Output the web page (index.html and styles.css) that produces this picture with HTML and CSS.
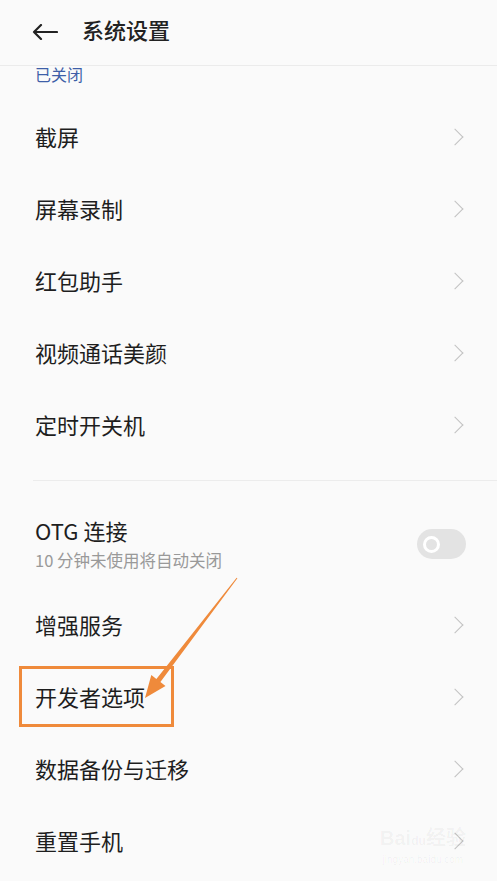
FILE: index.html
```html
<!DOCTYPE html>
<html lang="zh-CN">
<head>
  <meta charset="UTF-8" />
  <meta name="viewport" content="width=device-width, initial-scale=1.0" />
  <title>系统设置</title>
  <link rel="stylesheet" href="styles.css">
</head>
<body>
  <div class="page">
    <header class="topbar">
      <svg class="back" width="26" height="16" viewBox="0 0 26 16">
        <path d="M25 8H2M9 1L2 8l7 7" fill="none" stroke="#222" stroke-width="2.2" stroke-linecap="round" stroke-linejoin="round"/>
      </svg>
      <h1>系统设置</h1>
    </header>

    <div class="list">
      <div class="item-tail"><span class="sub sub-blue">已关闭</span></div>

      <div class="item"><span class="label">截屏</span><span class="chev"></span></div>
      <div class="item"><span class="label">屏幕录制</span><span class="chev"></span></div>
      <div class="item"><span class="label">红包助手</span><span class="chev"></span></div>
      <div class="item"><span class="label">视频通话美颜</span><span class="chev"></span></div>
      <div class="item"><span class="label">定时开关机</span><span class="chev"></span></div>

      <div class="divider"><div class="line"></div></div>

      <div class="item item-two">
        <div class="texts">
          <span class="label">OTG 连接</span>
          <span class="sub">10 分钟未使用将自动关闭</span>
        </div>
        <span class="switch"><span class="knob"></span></span>
      </div>
      <div class="item"><span class="label">增强服务</span><span class="chev"></span></div>
      <div class="item"><span class="label">开发者选项</span><span class="chev"></span></div>
      <div class="item"><span class="label">数据备份与迁移</span><span class="chev"></span></div>
      <div class="item"><span class="label">重置手机</span><span class="chev"></span></div>
    </div>

    <!-- annotation drawn over the screenshot -->
    <div class="mark-box"></div>
    <svg class="mark-arrow" width="497" height="881" viewBox="0 0 497 881">
      <polygon points="145,698 151.3,675 156.4,679 236.6,577.7 237.4,578.3 160.4,682 165.5,686" fill="#ef8a3b"/>
    </svg>

    <div class="watermark">
      <div class="wm-logo">Bai<span class="wm-du">du</span>经验</div>
      <div class="wm-url">jingyan.baidu.com</div>
    </div>
  </div>
</body>
</html>
```

FILE: styles.css
```css
body {
  margin: 0;
  background: #fafafa;
  font-family: "Noto Sans CJK SC", "Noto Sans", sans-serif;
  color: #1e1e1e;
}

.page {
  position: relative;
  width: 497px;
  height: 881px;
  overflow: hidden;
}

.topbar {
  display: flex;
  align-items: center;
  height: 65px;
  border-bottom: 1px solid #ebebeb;
  padding-left: 32px;
}

.back {
  display: block;
  margin-top: -2px;
}

.topbar h1 {
  margin: -7px 0 0 24px;
  font-size: 22px;
  font-weight: 500;
  line-height: 30px;
  color: #222;
}

.item-tail {
  height: 35px;
  padding-left: 35px;
}

.sub {
  font-size: 16.5px;
  line-height: 16px;
  color: #999;
}

.sub-blue {
  display: block;
  font-size: 16px;
  color: #3e5fa8;
}

.item {
  display: flex;
  align-items: center;
  justify-content: space-between;
  height: 72px;
  padding: 0 32px 0 35px;
}

.label {
  font-size: 22px;
  line-height: 32px;
  margin-top: -2px;
}

.chev {
  width: 11px;
  height: 11px;
  border-top: 1.6px solid #c2c2c2;
  border-right: 1.6px solid #c2c2c2;
  transform: rotate(45deg);
  margin-right: 4px;
}

.divider {
  height: 38px;
  padding: 19px 0 0 33px;
  box-sizing: border-box;
}

.divider .line {
  height: 1px;
  background: #ececec;
}

.item-two {
  height: 90px;
  box-sizing: border-box;
}

.texts {
  display: flex;
  flex-direction: column;
  margin-top: -1px;
}

.texts .sub {
  line-height: 24px;
  margin-top: 2px;
}

.switch {
  display: flex;
  align-items: center;
  width: 49px;
  height: 30px;
  border-radius: 15px;
  background: #e3e3e3;
  margin-right: -1px;
}

.knob {
  width: 11px;
  height: 11px;
  border: 3px solid #fff;
  border-radius: 50%;
  margin-left: 6px;
  background: #e3e3e3;
}

.mark-box {
  position: absolute;
  left: 19px;
  top: 666px;
  width: 149px;
  height: 55px;
  border: 3px solid #ef8a3b;
}

.mark-arrow {
  position: absolute;
  left: 0;
  top: 0;
  pointer-events: none;
}

.watermark {
  position: absolute;
  left: 380px;
  top: 826px;
  color: rgba(0, 0, 0, 0.045);
  text-align: center;
}

.wm-logo {
  font-family: "Liberation Sans", sans-serif;
  font-size: 20px;
  font-weight: bold;
  line-height: 24px;
}

.wm-du {
  font-size: 12px;
}

.wm-url {
  font-family: "Liberation Sans", sans-serif;
  font-size: 10px;
  line-height: 14px;
}
```
